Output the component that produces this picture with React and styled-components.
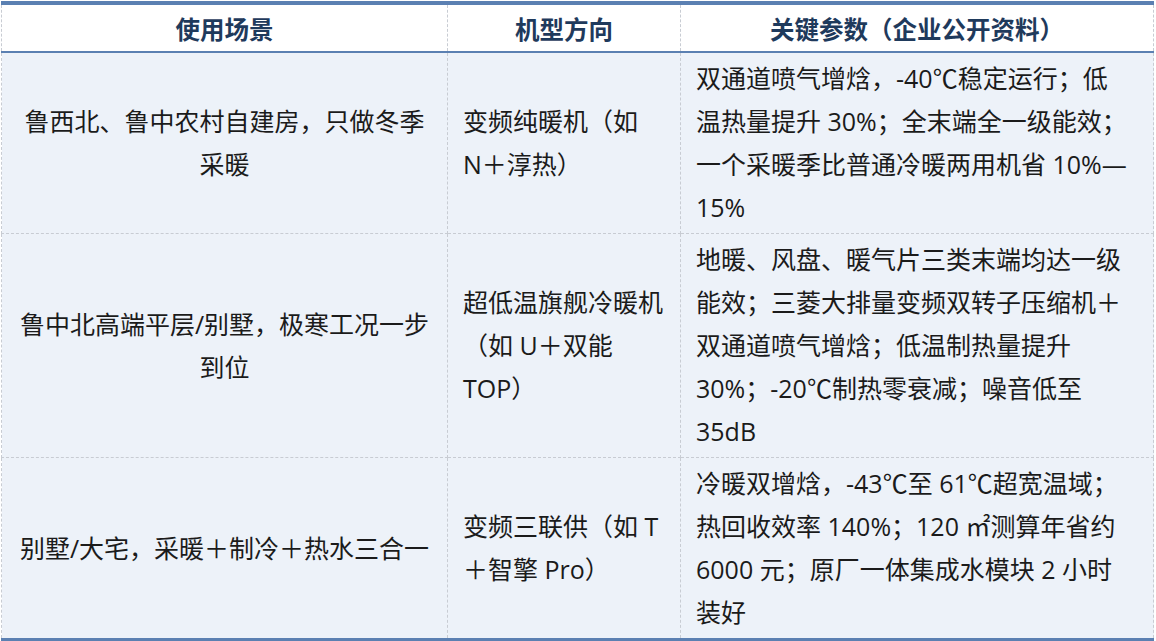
import React from "react";
import styled, { createGlobalStyle } from "styled-components";

const rows = [
  {
    scene: ["鲁西北、鲁中农村自建房，只做冬季", "采暖"],
    model: ["变频纯暖机（如", "N＋淳热）"],
    params: [
      "双通道喷气增焓，-40℃稳定运行；低",
      "温热量提升 30%；全末端全一级能效；",
      "一个采暖季比普通冷暖两用机省 10%—",
      "15%",
    ],
  },
  {
    scene: ["鲁中北高端平层/别墅，极寒工况一步", "到位"],
    model: ["超低温旗舰冷暖机", "（如 U＋双能", "TOP）"],
    params: [
      "地暖、风盘、暖气片三类末端均达一级",
      "能效；三菱大排量变频双转子压缩机＋",
      "双通道喷气增焓；低温制热量提升",
      "30%；-20℃制热零衰减；噪音低至",
      "35dB",
    ],
  },
  {
    scene: ["别墅/大宅，采暖＋制冷＋热水三合一"],
    model: ["变频三联供（如 T", "＋智擎 Pro）"],
    params: [
      "冷暖双增焓，-43℃至 61℃超宽温域；",
      "热回收效率 140%；120 ㎡测算年省约",
      "6000 元；原厂一体集成水模块 2 小时",
      "装好",
    ],
  },
];

const GlobalStyle = createGlobalStyle`
  body {
    margin: 0;
    background: #ffffff;
    font-family: "Open Sans", "Noto Sans CJK SC", sans-serif;
  }
`;

const Table = styled.table`
  width: 1152px;
  margin: 1px 0 0 1px;
  border-collapse: collapse;
  table-layout: fixed;
  border-top: 4px solid #5b80b2;
  border-bottom: 5px solid #5b80b2;
`;

const HeadCell = styled.th`
  height: 46px;
  padding: 0;
  background: #ffffff;
  color: #1f3a5c;
  font-size: 24.5px;
  font-weight: 700;
  text-align: center;
  border-left: 1px dashed #c8ccd3;
  border-right: 1px dashed #c8ccd3;
  border-bottom: 2px solid #5b80b2;
`;

const Row = styled.tr`
  background: #edf2f9;
`;

const Cell = styled.td`
  padding: 4px ${(p) => (p.$center ? "8px" : "15px")};
  vertical-align: middle;
  text-align: ${(p) => (p.$center ? "center" : "left")};
  color: #1b1b1b;
  font-size: 25px;
  line-height: 43px;
  border: 1px dashed #c8ccd3;
`;

const Line = styled.span`
  display: block;
  white-space: nowrap;
`;

const Lines = ({ items }) =>
  items.map((text, i) => <Line key={i}>{text}</Line>);

const App = () => {
  return (
    <>
      <GlobalStyle />
      <Table>
        <colgroup>
          <col style={{ width: "446px" }} />
          <col style={{ width: "233px" }} />
          <col style={{ width: "473px" }} />
        </colgroup>
        <thead>
          <tr>
            <HeadCell>使用场景</HeadCell>
            <HeadCell>机型方向</HeadCell>
            <HeadCell>关键参数（企业公开资料）</HeadCell>
          </tr>
        </thead>
        <tbody>
          {rows.map((row, idx) => (
            <Row key={idx}>
              <Cell $center>
                <Lines items={row.scene} />
              </Cell>
              <Cell>
                <Lines items={row.model} />
              </Cell>
              <Cell>
                <Lines items={row.params} />
              </Cell>
            </Row>
          ))}
        </tbody>
      </Table>
    </>
  );
};

export default App;
